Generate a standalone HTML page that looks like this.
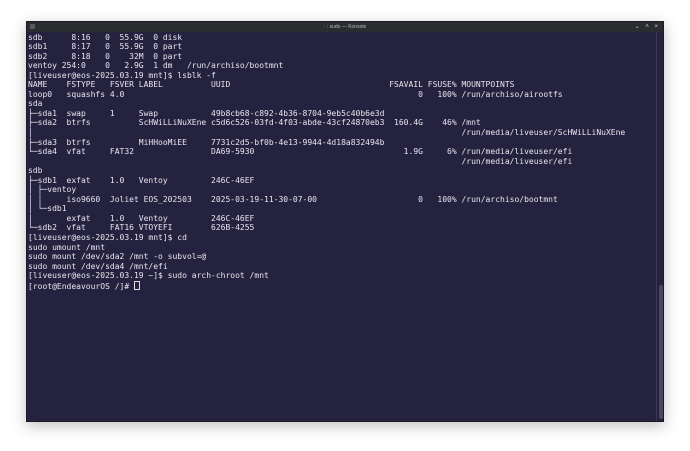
<!DOCTYPE html>
<html><head><meta charset="utf-8"><style>
html,body{margin:0;padding:0;width:690px;height:451px;background:#fff;overflow:hidden}
.win{position:absolute;left:26px;top:21px;width:638px;height:401px;background:#25223f;box-shadow:0 4px 14px rgba(0,0,0,.25);border:1px solid #1b1a26;box-sizing:border-box}
.tb{position:absolute;left:0;top:0;right:0;height:10px;background:#2a2c30;color:#bbb;font:5px "Liberation Sans",sans-serif;text-align:center;line-height:10px}
.ico{position:absolute;left:3px;top:2px;width:5px;height:5px;background:#555a60}
.btns{position:absolute;right:3px;top:0;color:#ccc;font-size:6px;letter-spacing:2px}
pre{position:absolute;left:1px;top:10.5px;margin:0;font-family:"DejaVu Sans Mono","Liberation Mono",monospace;font-size:8px;line-height:9.55px;color:#e8e6ee;white-space:pre}
.sb{position:absolute;left:629px;top:10px;width:1px;bottom:0;background:#3b3857}
.th{position:absolute;left:632px;top:263px;width:4px;bottom:2px;background:#4a4766;border-radius:2px}
.cur{display:inline-block;width:4.3px;height:7px;border:1px solid #ddd;vertical-align:-1px}
</style></head><body>
<div class="win">
<div class="tb"><div class="ico"></div>· : sudo — Konsole<div class="btns">⌄ ˄ ×</div></div>
<pre>sdb      8:16   0  55.9G  0 disk
sdb1     8:17   0  55.9G  0 part
sdb2     8:18   0    32M  0 part
ventoy 254:0    0   2.9G  1 dm   /run/archiso/bootmnt
[liveuser@eos-2025.03.19 mnt]$ lsblk -f
NAME    FSTYPE   FSVER LABEL          UUID                                 FSAVAIL FSUSE% MOUNTPOINTS
loop0   squashfs 4.0                                                             0   100% /run/archiso/airootfs
sda
├─sda1  swap     1     Swap           49b8cb68-c892-4b36-8704-9eb5c40b6e3d
├─sda2  btrfs          ScHWiLLiNuXEne c5d6c526-03fd-4f03-abde-43cf24870eb3  160.4G    46% /mnt
│                                                                                         /run/media/liveuser/ScHWiLLiNuXEne
├─sda3  btrfs          MiHHooMiEE     7731c2d5-bf0b-4e13-9944-4d18a832494b
└─sda4  vfat     FAT32                DA69-5930                               1.9G     6% /run/media/liveuser/efi
                                                                                          /run/media/liveuser/efi
sdb
├─sdb1  exfat    1.0   Ventoy         246C-46EF
│ ├─ventoy
│ │     iso9660  Joliet EOS_202503    2025-03-19-11-30-07-00                     0   100% /run/archiso/bootmnt
│ └─sdb1
│       exfat    1.0   Ventoy         246C-46EF
└─sdb2  vfat     FAT16 VTOYEFI        626B-4255
[liveuser@eos-2025.03.19 mnt]$ cd
sudo umount /mnt
sudo mount /dev/sda2 /mnt -o subvol=@
sudo mount /dev/sda4 /mnt/efi
[liveuser@eos-2025.03.19 ~]$ sudo arch-chroot /mnt
[root@EndeavourOS /]# <span class="cur"></span></pre>
<div class="sb"></div><div class="th"></div>
</div>
</body></html>
